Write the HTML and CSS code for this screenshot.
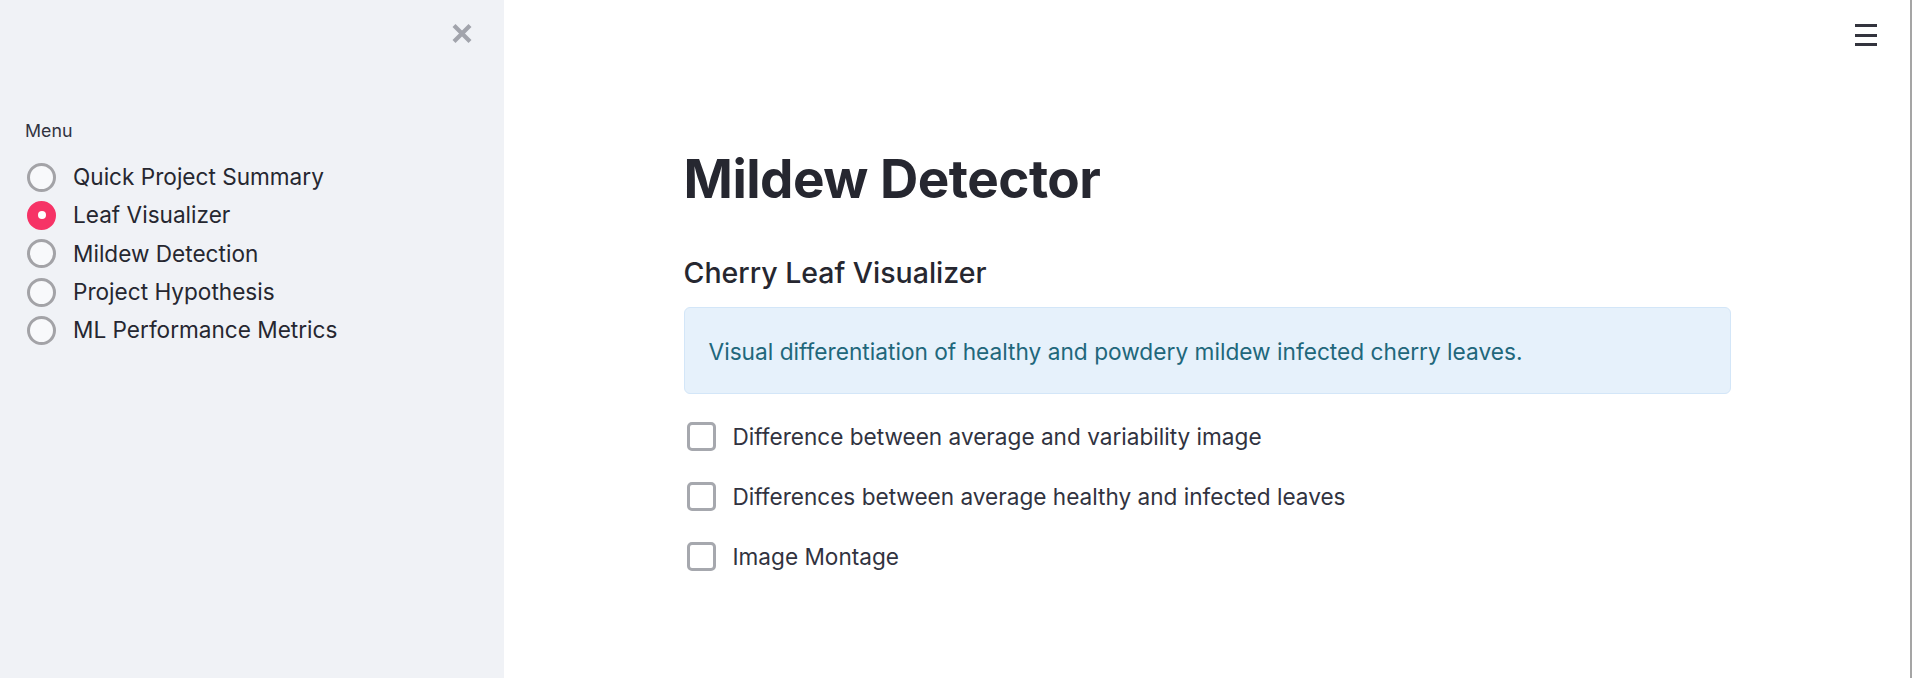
FILE: index.html
```html
<!DOCTYPE html>
<html lang="en">
<head>
<meta charset="utf-8">
<title>Mildew Detector</title>
<link rel="stylesheet" href="styles.css">
</head>
<body>
<div class="app">
  <aside class="sidebar">
    <div class="sidebar-top">
      <button class="close-btn" aria-label="Close sidebar">
        <svg width="22" height="21" viewBox="0 0 22 21"><path d="M3 2.5 L19 18.5 M19 2.5 L3 18.5" stroke="#a2a4ac" stroke-width="4.2" fill="none"/></svg>
      </button>
    </div>
    <div class="menu-label">Menu</div>
    <div class="radio-group">
      <div class="radio-row"><span class="radio"></span><span class="radio-text">Quick Project Summary</span></div>
      <div class="radio-row"><span class="radio checked"></span><span class="radio-text">Leaf Visualizer</span></div>
      <div class="radio-row"><span class="radio"></span><span class="radio-text">Mildew Detection</span></div>
      <div class="radio-row"><span class="radio"></span><span class="radio-text">Project Hypothesis</span></div>
      <div class="radio-row"><span class="radio"></span><span class="radio-text">ML Performance Metrics</span></div>
    </div>
  </aside>
  <main class="main">
    <button class="menu-btn" aria-label="Menu"><span></span><span></span><span></span></button>
    <div class="content">
      <h1 class="title">Mildew Detector</h1>
      <h3 class="subheader">Cherry Leaf Visualizer</h3>
      <div class="info">Visual differentiation of healthy and powdery mildew infected cherry leaves.</div>
      <div class="checks">
        <div class="check-row"><span class="checkbox"></span><span class="check-text">Difference between average and variability image</span></div>
        <div class="check-row"><span class="checkbox"></span><span class="check-text">Differences between average healthy and infected leaves</span></div>
        <div class="check-row"><span class="checkbox"></span><span class="check-text">Image Montage</span></div>
      </div>
    </div>
  </main>
  <div class="scrollbar"></div>
</div>
</body>
</html>
```

FILE: styles.css
```css
* { box-sizing: border-box; }
html, body { margin: 0; padding: 0; height: 100%; }
body {
  font-family: "Inter", "Open Sans", sans-serif;
  background: #ffffff;
  color: #262730;
  overflow: hidden;
}
.app {
  display: flex;
  height: 678px;
}
.sidebar {
  width: 504px;
  flex: 0 0 504px;
  background: #f0f2f6;
  padding-left: 27px;
}
.sidebar-top {
  display: flex;
  justify-content: flex-end;
  padding: 23px 31px 0 0;
  height: 119px;
}
.close-btn {
  border: none;
  background: transparent;
  padding: 0;
  width: 22px;
  height: 21px;
  display: block;
  cursor: pointer;
}
.close-btn svg { display: block; }
.menu-label {
  font-size: 17.8px;
  line-height: 24px;
  color: #31333f;
  margin-left: -2px;
  height: 39px;
}
.radio-group {
  display: flex;
  flex-direction: column;
}
.radio-row {
  display: flex;
  align-items: center;
  height: 38.3px;
}
.radio {
  width: 29px;
  height: 29px;
  border-radius: 50%;
  border: 3px solid #a3a3a7;
  background: #f8f9fb;
  flex: 0 0 29px;
  display: flex;
  align-items: center;
  justify-content: center;
}
.radio.checked {
  background: #f63366;
  border-color: #f63366;
}
.radio.checked::after {
  content: "";
  width: 8px;
  height: 8px;
  border-radius: 50%;
  background: #ffffff;
}
.radio-text {
  margin-left: 17px;
  font-size: 22.6px;
  line-height: 30px;
  color: #262730;
}
.main {
  flex: 1;
  position: relative;
}
.menu-btn {
  position: absolute;
  top: 24px;
  right: 33px;
  width: 22px;
  height: 22px;
  border: none;
  background: transparent;
  padding: 0;
  display: flex;
  flex-direction: column;
  justify-content: space-between;
}
.menu-btn span {
  display: block;
  height: 3px;
  background: #33343e;
}
.content {
  max-width: 1047px;
  margin: 0 auto;
  padding-top: 147px;
}
.title {
  margin: 0;
  font-size: 53px;
  line-height: 64.8px;
  font-weight: 700;
  color: #262730;
  letter-spacing: -0.5px;
}
.subheader {
  margin: 44px 0 0 0;
  font-size: 28.5px;
  line-height: 33.6px;
  font-weight: 500;
  color: #262730;
}
.info {
  margin-top: 17.4px;
  background: #e6f1fb;
  border: 1px solid #d3e6f8;
  border-radius: 6px;
  padding: 27px 24px 25px;
  font-size: 22.7px;
  line-height: 33px;
  color: #21677b;
}
.checks {
  margin-top: 13px;
  display: flex;
  flex-direction: column;
}
.check-row {
  display: flex;
  align-items: center;
  height: 60px;
}
.checkbox {
  width: 29px;
  height: 29px;
  flex: 0 0 29px;
  margin-left: 3px;
  border: 3px solid #a6a8ae;
  border-radius: 5px;
  background: #ffffff;
}
.check-text {
  margin-left: 17px;
  font-size: 22.6px;
  line-height: 30px;
  color: #31333f;
}
.scrollbar {
  width: 2px;
  flex: 0 0 2px;
  background: #a5a5a5;
}
```
